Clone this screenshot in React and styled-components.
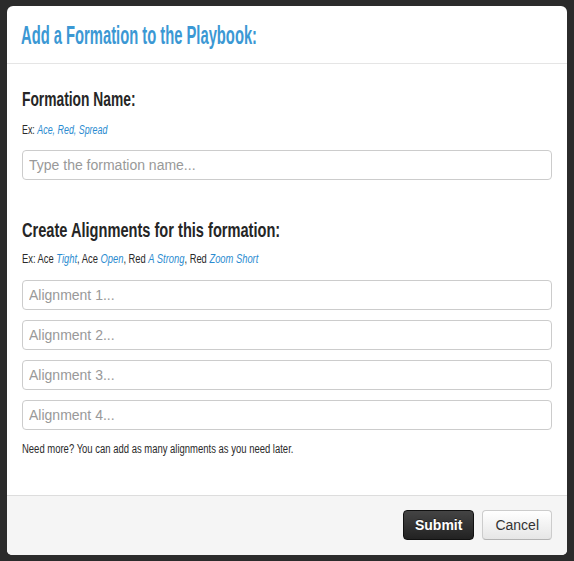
import React from "react";
import styled, { createGlobalStyle } from "styled-components";

const Global = createGlobalStyle`
  html, body { margin: 0; padding: 0; }
  body {
    background: #2b2b2b;
    width: 574px;
    height: 561px;
    overflow: hidden;
  }
`;

const Page = styled.div`
  width: 574px;
  height: 561px;
  padding: 6px 7px;
  box-sizing: border-box;
`;

const Modal = styled.div`
  width: 560px;
  height: 549px;
  background: #fff;
  border-radius: 6px 6px 5px 5px;
  display: flex;
  flex-direction: column;
  overflow: hidden;
`;

const Header = styled.div`
  height: 58px;
  box-sizing: border-box;
  border-bottom: 1px solid #e5e5e5;
  padding: 0 14px;
  display: flex;
  align-items: center;
`;

const Narrow = styled.span`
  display: inline-block;
  white-space: nowrap;
  transform-origin: 0 50%;
  transform: scaleX(${(p) => p.$sx || 1});
`;

const Title = styled.h3`
  margin: 0;
  font-family: "Liberation Sans", Arial, sans-serif;
  font-weight: bold;
  font-size: 25px;
  line-height: 30px;
  color: #3b98d4;
`;

const Body = styled.div`
  flex: 1;
  padding: 23px 15px 0;
`;

const Label = styled.h4`
  margin: ${(p) => p.$m || "0"};
  font-family: "Liberation Sans", Arial, sans-serif;
  font-weight: bold;
  font-size: 20px;
  line-height: 24px;
  color: #262626;
`;

const Hint = styled.p`
  margin: ${(p) => p.$m || "0"};
  font-family: "Liberation Sans", Arial, sans-serif;
  font-size: 12px;
  line-height: 16px;
  color: #2a2a2a;
`;

const Ex = styled.em`
  color: #2a8bd0;
  font-style: italic;
`;

const Input = styled.input`
  display: block;
  width: 530px;
  height: 30px;
  box-sizing: border-box;
  border: 1px solid #cccccc;
  border-radius: 4px;
  padding: 0 6px;
  font-family: "Liberation Sans", Arial, sans-serif;
  font-size: 14px;
  color: #555;
  background: #fff;
  outline: none;
  &::placeholder { color: #999; }
`;

const Stack = styled.div`
  display: flex;
  flex-direction: column;
  gap: 10px;
  margin-top: ${(p) => p.$top || "0"};
`;

const Footer = styled.div`
  height: 60px;
  box-sizing: border-box;
  background: #f5f5f5;
  border-top: 1px solid #dddddd;
  display: flex;
  justify-content: flex-end;
  align-items: center;
  gap: 8px;
  padding: 0 15px 1px;
`;

const Button = styled.button`
  height: 30px;
  border-radius: 4px;
  font-family: "Liberation Sans", Arial, sans-serif;
  font-size: 14px;
  cursor: pointer;
  ${(p) =>
    p.$dark
      ? `
    padding: 0 11px;
    background: linear-gradient(#444, #222);
    border: 1px solid #111;
    color: #fff;
    font-weight: bold;
    text-shadow: 0 -1px 0 rgba(0,0,0,0.4);
  `
      : `
    padding: 0 12px;
    background: linear-gradient(#fff, #e6e6e6);
    border: 1px solid #ccc;
    border-bottom-color: #b3b3b3;
    color: #333;
  `}
`;

export default function App() {
  return (
    <>
      <Global />
      <Page>
        <Modal>
          <Header>
            <Title>
              <Narrow $sx={0.59}>Add a Formation to the Playbook:</Narrow>
            </Title>
          </Header>
          <Body>
            <Label>
              <Narrow $sx={0.69}>Formation Name:</Narrow>
            </Label>
            <Hint $m="11px 0 0">
              <Narrow $sx={0.74}>
                Ex: <Ex>Ace, Red, Spread</Ex>
              </Narrow>
            </Hint>
            <Stack $top="12px">
              <Input placeholder="Type the formation name..." />
            </Stack>
            <Label $m="38px 0 0">
              <Narrow $sx={0.73}>Create Alignments for this formation:</Narrow>
            </Label>
            <Hint $m="9px 0 0">
              <Narrow $sx={0.78}>
                Ex: Ace <Ex>Tight</Ex>, Ace <Ex>Open</Ex>, Red <Ex>A Strong</Ex>, Red{" "}
                <Ex>Zoom Short</Ex>
              </Narrow>
            </Hint>
            <Stack $top="13px">
              <Input placeholder="Alignment 1..." />
              <Input placeholder="Alignment 2..." />
              <Input placeholder="Alignment 3..." />
              <Input placeholder="Alignment 4..." />
            </Stack>
            <Hint $m="11px 0 0">
              <Narrow $sx={0.79}>
                Need more? You can add as many alignments as you need later.
              </Narrow>
            </Hint>
          </Body>
          <Footer>
            <Button $dark>Submit</Button>
            <Button>Cancel</Button>
          </Footer>
        </Modal>
      </Page>
    </>
  );
}
